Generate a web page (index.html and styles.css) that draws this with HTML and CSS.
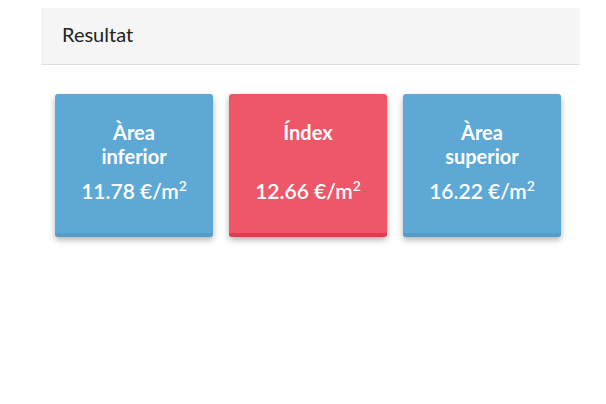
FILE: index.html
```html
<!DOCTYPE html>
<html lang="ca">
<head>
    <meta charset="UTF-8">
    <meta name="viewport" content="width=device-width, initial-scale=1.0">
    <title>Resultat</title>
    <link rel="stylesheet" href="styles.css">
</head>
<body>
    <div class="panel">
        <div class="panel-heading">Resultat</div>
        <div class="panel-body">
            <div class="result-box blue">
                <div class="result-title">Àrea<br>inferior</div>
                <div class="result-value">11.78 €/m<sup>2</sup></div>
            </div>
            <div class="result-box red">
                <div class="result-title">Índex</div>
                <div class="result-value">12.66 €/m<sup>2</sup></div>
            </div>
            <div class="result-box blue">
                <div class="result-title">Àrea<br>superior</div>
                <div class="result-value">16.22 €/m<sup>2</sup></div>
            </div>
        </div>
    </div>
</body>
</html>
```

FILE: styles.css
```css
body {
    font-family: Lato, "Open Sans", sans-serif;
    margin: 0;
    padding: 8px 26px 0 41px;
    background: #fff;
    color: #222;
}
.panel {
    background: #fff;
}
.panel-heading {
    background-color: #f5f5f5;
    border-bottom: 1px solid #ddd;
    height: 56px;
    line-height: 52px;
    padding: 0 21px;
    font-size: 20px;
}
.panel-body {
    display: flex;
    gap: 16px;
    padding: 29px 14px;
}
.result-box {
    width: 158px;
    height: 143px;
    border-radius: 3px;
    color: #fff;
    text-align: center;
    box-shadow: 0 3px 6px rgba(0, 0, 0, 0.3);
    padding-top: 26px;
    box-sizing: border-box;
}
.blue {
    background-color: #5ea8d6;
    border-bottom: 4px solid #569cc7;
}
.red {
    background-color: #ed5768;
    border-bottom: 4px solid #df3d4f;
}
.result-title {
    font-weight: bold;
    font-size: 20px;
    line-height: 24px;
    height: 48px;
}
.result-value {
    font-size: 21px;
    font-weight: 600;
    line-height: 40px;
    margin-top: 3px;
}
.result-value sup {
    font-size: 14px;
    line-height: 0;
}
```
